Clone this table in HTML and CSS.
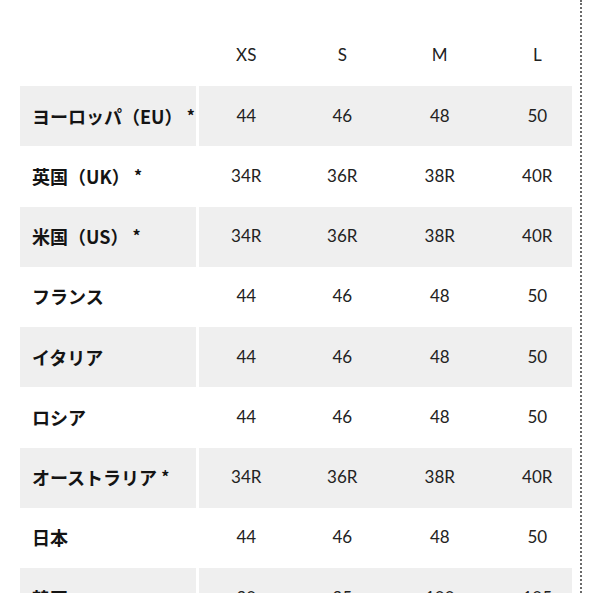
FILE: index.html
```html
<!DOCTYPE html>
<html lang="ja">
<head>
<meta charset="utf-8">
<link rel="stylesheet" href="styles.css">
</head>
<body>
<div class="page">
  <div class="table">
    <div class="row head">
      <div class="label"></div>
      <div class="data">
        <span>XS</span><span>S</span><span>M</span><span>L</span>
      </div>
    </div>
    <div class="row shade">
      <div class="label">ヨーロッパ（EU） <span class="ast">*</span></div>
      <div class="data"><span>44</span><span>46</span><span>48</span><span>50</span></div>
    </div>
    <div class="row">
      <div class="label">英国（UK） <span class="ast">*</span></div>
      <div class="data"><span>34R</span><span>36R</span><span>38R</span><span>40R</span></div>
    </div>
    <div class="row shade">
      <div class="label">米国（US） <span class="ast">*</span></div>
      <div class="data"><span>34R</span><span>36R</span><span>38R</span><span>40R</span></div>
    </div>
    <div class="row">
      <div class="label">フランス</div>
      <div class="data"><span>44</span><span>46</span><span>48</span><span>50</span></div>
    </div>
    <div class="row shade">
      <div class="label">イタリア</div>
      <div class="data"><span>44</span><span>46</span><span>48</span><span>50</span></div>
    </div>
    <div class="row">
      <div class="label">ロシア</div>
      <div class="data"><span>44</span><span>46</span><span>48</span><span>50</span></div>
    </div>
    <div class="row shade">
      <div class="label">オーストラリア <span class="ast">*</span></div>
      <div class="data"><span>34R</span><span>36R</span><span>38R</span><span>40R</span></div>
    </div>
    <div class="row">
      <div class="label">日本</div>
      <div class="data"><span>44</span><span>46</span><span>48</span><span>50</span></div>
    </div>
    <div class="row shade">
      <div class="label">韓国</div>
      <div class="data"><span>90</span><span>95</span><span>100</span><span>105</span></div>
    </div>
  </div>
</div>
</body>
</html>
```

FILE: styles.css
```css
html, body {
  margin: 0;
  padding: 0;
  background: #ffffff;
}

body {
  overflow: hidden;
  height: 593px;
}

.page {
  box-sizing: border-box;
  width: 582px;
  min-height: 700px;
  padding: 24px 0 0 20px;
  border-right: 2px dotted #6a6a6a;
}

.table {
  width: 552px;
  display: flex;
  flex-direction: column;
}

.row {
  display: flex;
  gap: 3px;
  height: 60.25px;
}

.row.head {
  height: 62px;
}

.label {
  box-sizing: border-box;
  width: 176px;
  flex: none;
  display: flex;
  align-items: center;
  padding-left: 12px;
  padding-bottom: 1px;
  font-family: "Noto Sans CJK JP", "Noto Sans", sans-serif;
  font-weight: 700;
  font-size: 18px;
  color: #141414;
  white-space: pre;
}

.ast {
  font-size: 16px;
  position: relative;
  top: -1px;
}

.data {
  flex: 1;
  min-width: 0;
  display: grid;
  grid-template-columns: 94.5px 97.5px 97.5px 97.5px;
  align-items: center;
  padding-bottom: 2px;
  font-family: Lato, "Liberation Sans", sans-serif;
  font-size: 17px;
  color: #222222;
}

.data span {
  text-align: center;
}

.shade .label,
.shade .data {
  background: #efefef;
}
```
